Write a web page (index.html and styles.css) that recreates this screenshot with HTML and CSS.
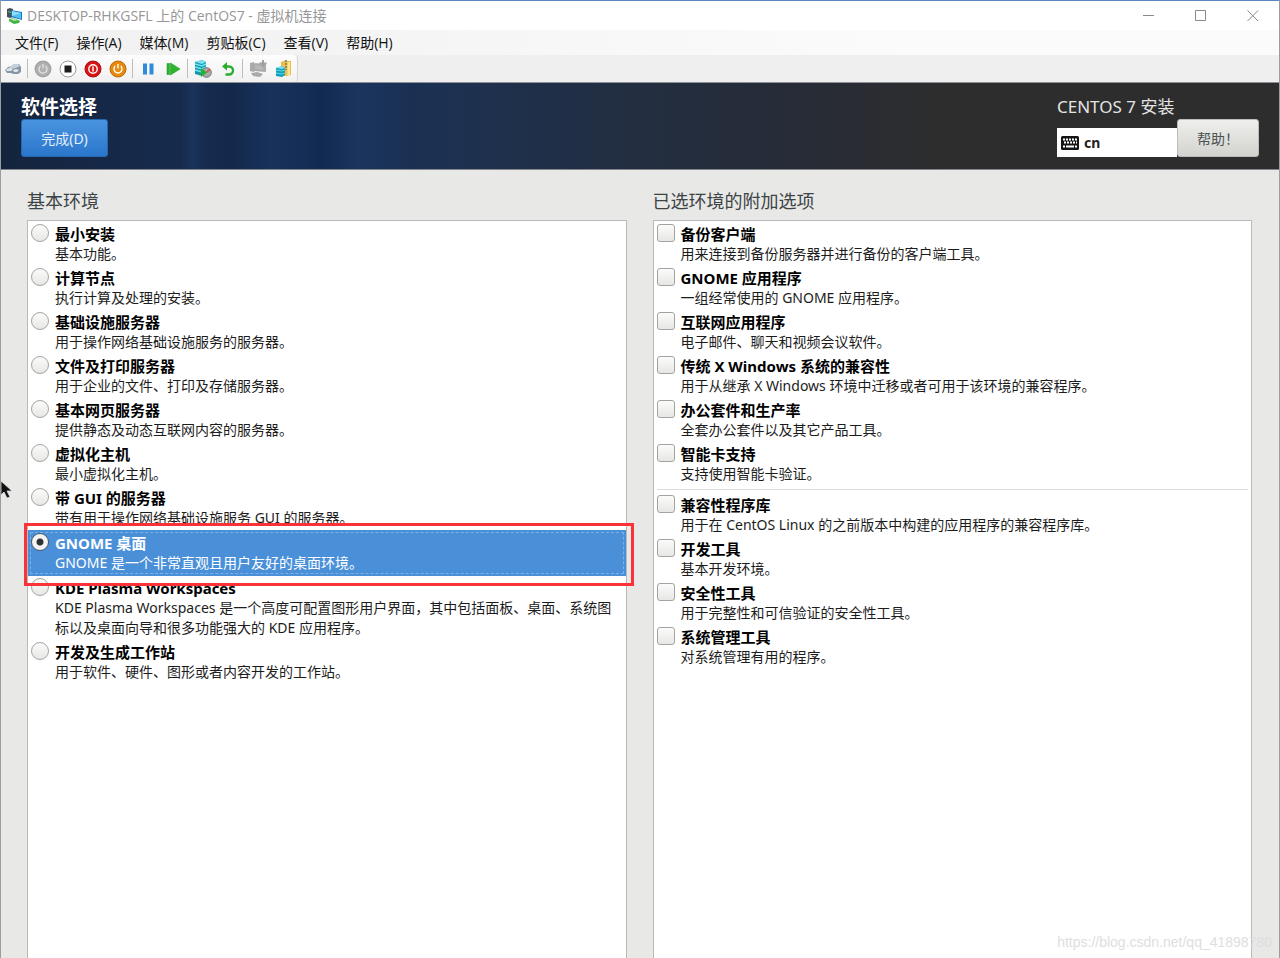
FILE: index.html
```html
<!DOCTYPE html>
<html lang="zh-CN">
<head>
<meta charset="utf-8">
<meta name="viewport" content="width=device-width, initial-scale=1">
<title>DESKTOP-RHKGSFL 上的 CentOS7 - 虚拟机连接</title>
<link rel="stylesheet" href="styles.css">
</head>
<body>
<div class="window">
  <header class="titlebar">
    <svg class="app-icon" width="18" height="16" viewBox="0 0 18 16" aria-hidden="true">
      <path d="M1 1l3-1 3 1v8l-3 1-3-1z" fill="#4b4f55"/>
      <path d="M2 3l3 1v1L2 4z" fill="#3fdc4c"/>
      <path d="M5 2l11 2v8L5 9z" fill="#1778c8"/>
      <path d="M6 3l9 2v6L6 8z" fill="#4fc0f2"/>
      <path d="M6 3l9 2-9 3z" fill="#8fdcfa"/>
      <path d="M3 11l5-1 6 3-1 2-5 1-5-3z" fill="#3fb53f"/>
      <path d="M4 11l4-1 4 2-4 1z" fill="#b9dfb9"/>
    </svg>
    <span class="window-title">DESKTOP-RHKGSFL 上的 CentOS7 - 虚拟机连接</span>
    <div class="window-controls">
      <button type="button" aria-label="最小化"><svg width="12" height="12" viewBox="0 0 12 12"><path d="M0 5.500h11"/></svg></button>
      <button type="button" aria-label="最大化"><svg width="12" height="12" viewBox="0 0 12 12"><path d="M.5.5h10v10H.5z"/></svg></button>
      <button type="button" aria-label="关闭"><svg width="12" height="12" viewBox="0 0 12 12"><path d="M.5.5l10.500 10.500M11 .5L.5 11"/></svg></button>
    </div>
  </header>

  <nav class="menubar">
    <button type="button">文件(F)</button>
    <button type="button">操作(A)</button>
    <button type="button">媒体(M)</button>
    <button type="button">剪贴板(C)</button>
    <button type="button">查看(V)</button>
    <button type="button">帮助(H)</button>
  </nav>

  <div class="toolbar-row">
    <div class="toolbar" role="toolbar" aria-label="工具栏">
      <button type="button" aria-label="Ctrl+Alt+Delete">
        <svg width="18" height="18" viewBox="0 0 18 18"><path d="M1 10l3-3 4-1 2-2h5l2 3v5l-3 2H9l-2-1H3z" fill="#8794a3"/><path d="M5 7l5-3h4l2 2-4 2-5 1z" fill="#c6d0dc"/><path d="M2 9l4-1 3 1-2 2H3zM9 10l3-1 3 1-2 2h-3z" fill="#dde4ec"/></svg>
      </button>
      <span class="divider"></span>
      <button type="button" aria-label="启动" disabled>
        <svg width="18" height="18" viewBox="0 0 18 18"><circle cx="9" cy="9" r="8.500" fill="#b0b0b0"/><circle cx="9" cy="9" r="7.500" fill="none" stroke="#a0a0a0"/><path d="M6.500 6a4 4 0 1 0 5 0M9 4v4.500" fill="none" stroke="#e4e4e4" stroke-width="1.300"/></svg>
      </button>
      <button type="button" aria-label="强行关闭">
        <svg width="18" height="18" viewBox="0 0 18 18"><circle cx="9" cy="9" r="8" fill="#fff" stroke="#999"/><path d="M5.500 5.500h7v7h-7z" fill="#1c1c1c"/></svg>
      </button>
      <button type="button" aria-label="关闭系统">
        <svg width="18" height="18" viewBox="0 0 18 18"><circle cx="9" cy="9" r="8" fill="#d91414" stroke="#a80e0e"/><circle cx="9" cy="9" r="4.200" fill="none" stroke="#fff" stroke-width="1.400"/><path d="M9 6.500v5" stroke="#fff" stroke-width="1.500"/></svg>
      </button>
      <button type="button" aria-label="保存">
        <svg width="18" height="18" viewBox="0 0 18 18"><circle cx="9" cy="9" r="8" fill="#e88a0c" stroke="#b8690a"/><path d="M6.300 6a4 4 0 1 0 5.400 0M9 4v4.500" fill="none" stroke="#fff" stroke-width="1.400"/></svg>
      </button>
      <span class="divider"></span>
      <button type="button" aria-label="暂停">
        <svg width="18" height="18" viewBox="0 0 18 18"><path d="M4 3.500h4v11H4zM10.500 3.500h4v11h-4z" fill="#2f8be0"/></svg>
      </button>
      <button type="button" aria-label="重置">
        <svg width="18" height="18" viewBox="0 0 18 18"><path d="M3 3.500h2.500v11H3zM6.500 3L16 9l-9.500 6z" fill="#2db52d" stroke="#1d9a24" stroke-width=".6"/></svg>
      </button>
      <span class="divider"></span>
      <button type="button" aria-label="检查点">
        <svg width="18" height="18" viewBox="0 0 18 18"><path d="M1 2l7-2 4 2v11l-4 3-7-2z" fill="#1595ad"/><path d="M1 2l7-2 4 2-4 2z" fill="#78e3ef"/><path d="M1 4l7 2 4-2M1 7l7 2 4-2M1 10l7 2" fill="none" stroke="#6ee4f0" stroke-width="1.400"/><circle cx="12.500" cy="12.500" r="4.800" fill="#a6abae" stroke="#6d7275"/><path d="M12.500 12.500L16 9" stroke="#e04a3a" stroke-width="1.500"/><path d="M7 8l6 4.500L7 17z" fill="#21b32b"/></svg>
      </button>
      <button type="button" aria-label="还原">
        <svg width="18" height="18" viewBox="0 0 18 18"><path d="M6 6.500h4a4 4 0 0 1 0 8H6.500" fill="none" stroke="#29ad2c" stroke-width="2.400"/><path d="M3 6.500L8 2v8.500z" fill="#29ad2c"/></svg>
      </button>
      <span class="divider"></span>
      <button type="button" aria-label="增强会话" disabled>
        <svg width="18" height="18" viewBox="0 0 18 18"><path d="M1 3l4-1v10l-4-1zM5 3l12 1v8L5 11zM2 13l6-1 6 2-3 3-7-1z" fill="#aaa"/><path d="M6 5l8 1v4L6 9z" fill="#b8b8b8"/><path d="M14 0v7M10.500 3.500h7" stroke="#a0a0a0" stroke-width="2"/></svg>
      </button>
      <button type="button" aria-label="共享">
        <svg width="18" height="18" viewBox="0 0 18 18"><path d="M6 2l5-2v16H6zM11 1h5v14l-5 1z" fill="#edbd4a"/><path d="M12.500 2H15v13h-2.500z" fill="#ffe391"/><path d="M11 0v10" stroke="#777" stroke-width="1.500" stroke-dasharray="2 1"/><path d="M1 8l6-2 3 2v7l-3 2-6-1z" fill="#129fba"/><path d="M1 8l6-2 3 2-3 1z" fill="#75e5f1"/><path d="M1 10l6 1 3-1M1 13l6 1 3-1" fill="none" stroke="#63d7e7"/></svg>
      </button>
    </div>
  </div>

  <section class="banner">
    <div class="banner-left">
      <h1>软件选择</h1>
      <button type="button" class="btn btn-primary">完成(D)</button>
    </div>
    <div class="banner-right">
      <p class="product">CENTOS 7 安装</p>
      <div class="banner-actions">
        <button type="button" class="layout-switch">
          <svg width="18" height="14" viewBox="0 0 18 14" aria-hidden="true"><rect width="18" height="14" rx="1.500" fill="#151515"/><path d="M2 3.500h14M3 6.500h13" stroke="#fff" stroke-width="2" stroke-dasharray="2 1"/><path d="M2 10.500h2M5 10.500h8M14 10.500h2" stroke="#fff" stroke-width="2"/></svg>
          <span>cn</span>
        </button>
        <button type="button" class="btn btn-help">帮助！</button>
      </div>
    </div>
  </section>

  <main class="content">
    <section class="column">
      <h2>基本环境</h2>
      <div class="list" role="radiogroup" aria-label="基本环境">
        <label class="row"><input type="radio" name="env"><span class="text"><b>最小安装</b><span>基本功能。</span></span></label>
        <label class="row"><input type="radio" name="env"><span class="text"><b>计算节点</b><span>执行计算及处理的安装。</span></span></label>
        <label class="row"><input type="radio" name="env"><span class="text"><b>基础设施服务器</b><span>用于操作网络基础设施服务的服务器。</span></span></label>
        <label class="row"><input type="radio" name="env"><span class="text"><b>文件及打印服务器</b><span>用于企业的文件、打印及存储服务器。</span></span></label>
        <label class="row"><input type="radio" name="env"><span class="text"><b>基本网页服务器</b><span>提供静态及动态互联网内容的服务器。</span></span></label>
        <label class="row"><input type="radio" name="env"><span class="text"><b>虚拟化主机</b><span>最小虚拟化主机。</span></span></label>
        <label class="row"><input type="radio" name="env"><span class="text"><b>带 GUI 的服务器</b><span>带有用于操作网络基础设施服务 GUI 的服务器。</span></span></label>
        <label class="row selected"><input type="radio" name="env" checked><span class="text"><b>GNOME 桌面</b><span>GNOME 是一个非常直观且用户友好的桌面环境。</span></span></label>
        <label class="row"><input type="radio" name="env"><span class="text"><b>KDE Plasma Workspaces</b><span>KDE Plasma Workspaces 是一个高度可配置图形用户界面，其中包括面板、桌面、系统图标以及桌面向导和很多功能强大的 KDE 应用程序。</span></span></label>
        <label class="row"><input type="radio" name="env"><span class="text"><b>开发及生成工作站</b><span>用于软件、硬件、图形或者内容开发的工作站。</span></span></label>
      </div>
    </section>
    <section class="column">
      <h2>已选环境的附加选项</h2>
      <div class="list" role="group" aria-label="已选环境的附加选项">
        <label class="row"><input type="checkbox"><span class="text"><b>备份客户端</b><span>用来连接到备份服务器并进行备份的客户端工具。</span></span></label>
        <label class="row"><input type="checkbox"><span class="text"><b>GNOME 应用程序</b><span>一组经常使用的 GNOME 应用程序。</span></span></label>
        <label class="row"><input type="checkbox"><span class="text"><b>互联网应用程序</b><span>电子邮件、聊天和视频会议软件。</span></span></label>
        <label class="row"><input type="checkbox"><span class="text"><b>传统 X Windows 系统的兼容性</b><span>用于从继承 X Windows 环境中迁移或者可用于该环境的兼容程序。</span></span></label>
        <label class="row"><input type="checkbox"><span class="text"><b>办公套件和生产率</b><span>全套办公套件以及其它产品工具。</span></span></label>
        <label class="row"><input type="checkbox"><span class="text"><b>智能卡支持</b><span>支持使用智能卡验证。</span></span></label>
        <hr>
        <label class="row"><input type="checkbox"><span class="text"><b>兼容性程序库</b><span>用于在 CentOS Linux 的之前版本中构建的应用程序的兼容程序库。</span></span></label>
        <label class="row"><input type="checkbox"><span class="text"><b>开发工具</b><span>基本开发环境。</span></span></label>
        <label class="row"><input type="checkbox"><span class="text"><b>安全性工具</b><span>用于完整性和可信验证的安全性工具。</span></span></label>
        <label class="row"><input type="checkbox"><span class="text"><b>系统管理工具</b><span>对系统管理有用的程序。</span></span></label>
      </div>
    </section>
  </main>

  <svg class="pointer" width="12" height="22" viewBox="0 0 12 22" aria-hidden="true"><path d="M0 2l11 10H6l3 6-3 1-3-6-3 3z" fill="#111" stroke="#ddd" stroke-width=".8"/></svg>
  <span class="watermark">https://blog.csdn.net/qq_41898780</span>
</div>
</body>
</html>
```
FILE: styles.css
```css
* { box-sizing: border-box; }

body {
  margin: 0;
  font-family: "Noto Sans", "Noto Sans CJK SC", sans-serif;
  color: #1c1c1c;
}

button {
  margin: 0;
  padding: 0;
  border: 0;
  background: none;
  font: inherit;
  color: inherit;
}

svg { display: block; }

.window {
  position: relative;
  display: flex;
  flex-direction: column;
  height: 100vh;
  overflow: hidden;
  border: 1px solid #9a9da1;
  border-top-color: #5a87bd;
  border-bottom: 0;
  background: #e8e8e6;
}

/* Host window chrome */
.titlebar {
  display: flex;
  align-items: center;
  flex: none;
  height: 29px;
  padding-left: 5px;
  background: #fff;
  color: #969696;
  font-family: "Open Sans", "Noto Sans CJK SC", sans-serif;
  font-size: 14px;
  line-height: 20px;
}

.window-title { margin-left: 3px; }

.window-controls {
  display: flex;
  margin-left: auto;
}

.window-controls button {
  display: grid;
  place-items: center;
  width: 52px;
  height: 29px;
}

.window-controls path {
  fill: none;
  stroke: #8a8a8a;
}

.menubar {
  display: flex;
  flex: none;
  height: 25px;
  padding-left: 5px;
  background: linear-gradient(90deg, #f0f0f0, #fbfbfb 70%);
  color: #111;
  font-family: "Open Sans", "Noto Sans CJK SC", sans-serif;
  font-size: 14px;
  line-height: 20px;
}

.menubar button { padding: 0 9px; }

.toolbar-row {
  flex: none;
  background: #efefef;
  border-bottom: 1px solid #8d9096;
}

.toolbar {
  display: flex;
  align-items: center;
  width: max-content;
  height: 27px;
  border-right: 1px solid #d4d4d4;
  border-radius: 0 4px 4px 0;
  background: linear-gradient(#fdfdfd, #f1f1f1);
}

.toolbar button {
  display: grid;
  place-items: center;
  width: 25px;
  height: 27px;
}

.toolbar button:first-child { width: 24px; }

.toolbar button:last-child { width: 27px; }

.divider {
  width: 1px;
  height: 19px;
  margin: 0 2px;
  background: #bdbdbd;
}

/* Installer header */
.banner {
  display: flex;
  justify-content: space-between;
  flex: none;
  height: 87px;
  padding: 12px 20px;
  border-bottom: 1px solid #85858c;
  color: #fff;
  background:
    linear-gradient(90deg, transparent 14%, rgba(60, 110, 180, .12) 15%, transparent 16%, rgba(10, 20, 45, .16) 18%, transparent 19%, rgba(50, 100, 170, .1) 21%, transparent 24%, rgba(10, 20, 50, .16) 25%, transparent 26%, rgba(60, 110, 180, .1) 28%, transparent 32%),
    linear-gradient(90deg, #14243e, #162a4b 12%, #142d56 25%, #1c3152 34%, #222e42 48%, #272c36 63%, #2d2d2d 74%);
}

.banner h1,
.product {
  margin: 0;
  line-height: 24px;
}

.banner h1 {
  font-size: 19px;
  font-weight: 700;
}

.product {
  font-size: 17px;
  color: #e4e4e4;
}

.btn {
  display: block;
  height: 38px;
  border-radius: 3px;
  font-size: 14px;
}

.btn-primary {
  width: 87px;
  border: 1px solid #2468b2;
  background: linear-gradient(#4a94df, #2a76cb);
  color: #e4eefa;
}

.btn-help {
  width: 82px;
  border: 1px solid #bcbcb8;
  background: linear-gradient(#efefed, #d2d2ce);
  color: #4a5254;
  font-family: "Noto Sans CJK TC", sans-serif;
}

.banner-actions {
  display: flex;
  align-items: flex-end;
}

.layout-switch {
  display: flex;
  align-items: center;
  gap: 5px;
  width: 120px;
  height: 29px;
  padding-left: 4px;
  background: #fff;
  color: #222;
  font-size: 14px;
  font-weight: 700;
}

/* Software lists */
.content {
  display: grid;
  grid-template-columns: 1fr 1fr;
  gap: 26px;
  flex: 1;
  min-height: 0;
  padding: 19px 27px 0 26px;
}

.column {
  display: flex;
  flex-direction: column;
}

.column h2 {
  margin: 0 0 6px;
  font-size: 18px;
  font-weight: 400;
  line-height: 25px;
  color: #3c4446;
}

.list {
  flex: 1;
  padding-top: 1px;
  border: 1px solid #bababa;
  border-bottom: 0;
  background: #fff;
}

.row {
  display: flex;
  gap: 6px;
  padding: 2px 3px;
}

.text { flex: 1; }

.text > * {
  display: block;
  font-size: 14px;
  line-height: 20px;
}

.text > b {
  font-size: 15px;
  color: #000;
}

.row input {
  appearance: none;
  flex: none;
  width: 18px;
  height: 18px;
  margin: 0;
  border: 1px solid #a3a39f;
  border-radius: 3px;
  background: linear-gradient(#fbfbfb, #e7e7e5);
}

.row input[type="radio"] { border-radius: 50%; }

.row input[type="radio"]:checked {
  border-color: #4a5a6a;
  background: radial-gradient(circle, #2c3335 0 3px, #f4f4f4 4px);
}

.selected {
  position: relative;
  padding: 3px;
  background: #4a90d9;
  color: #fff;
  outline: 1px dashed #7db0e6;
  outline-offset: -3px;
}

.selected .text > b { color: #fff; }

/* Highlight frame drawn over the neighbouring rows */
.selected::after {
  content: "";
  position: absolute;
  inset: -7px -8px -10px -4px;
  border: 3px solid #fb3338;
}

.list hr {
  height: 1px;
  margin: 3px;
  border: 0;
  background: #dcdcdc;
}

.pointer {
  position: absolute;
  left: 0;
  top: 478px;
}

.watermark {
  position: absolute;
  right: 7px;
  bottom: 8px;
  font-family: "Liberation Sans", Arial, sans-serif;
  font-size: 14px;
  line-height: 16px;
  color: #dedede;
}
```
